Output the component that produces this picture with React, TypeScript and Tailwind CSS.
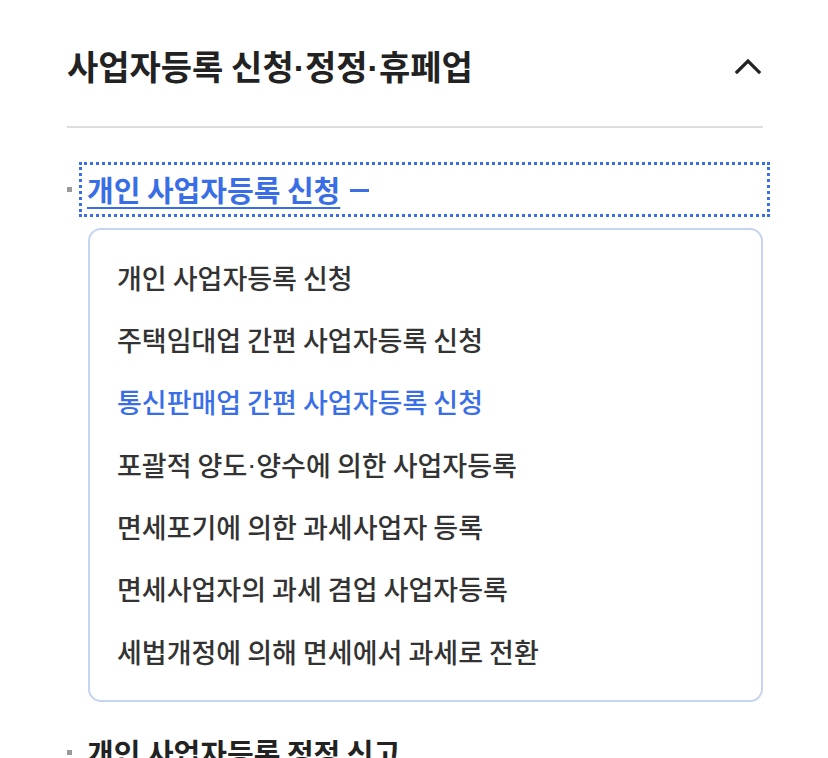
import React from "react";

const items = [
  { t: "개인 사업자등록 신청", active: false },
  { t: "주택임대업 간편 사업자등록 신청", active: false },
  { t: "통신판매업 간편 사업자등록 신청", active: true },
  { t: "포괄적 양도·양수에 의한 사업자등록", active: false },
  { t: "면세포기에 의한 과세사업자 등록", active: false },
  { t: "면세사업자의 과세 겸업 사업자등록", active: false },
  { t: "세법개정에 의해 면세에서 과세로 전환", active: false },
];

function Dot() {
  return <span style={{ fontFamily: '"Liberation Sans", sans-serif' }}>·</span>;
}

function withDots(t: string) {
  const parts = t.split("·");
  return parts.map((p, i) => (
    <React.Fragment key={i}>
      {i > 0 && <Dot />}
      {p}
    </React.Fragment>
  ));
}

export default function App() {
  return (
    <div
      className="w-[828px] h-[758px] overflow-hidden bg-white pl-[67px] pr-[65px]"
      style={{ fontFamily: '"Noto Sans CJK KR", "Noto Sans", sans-serif' }}
    >
      <div className="flex items-center justify-between h-[126px] pt-[8px]">
        <h2 className="text-[34px] font-bold text-[#222] leading-none">{withDots("사업자등록 신청·정정·휴페업")}</h2>
        <svg width="28" height="20" viewBox="0 0 28 20" className="mr-[1px] mb-[2px]">
          <path d="M3 16 L14 5 L25 16" fill="none" stroke="#222" strokeWidth="3.2" strokeLinecap="square" />
        </svg>
      </div>
      <div className="h-[2px] bg-[#dedede]" />
      <div className="mt-[34px] flex items-center">
        <span className="w-[5px] h-[5px] bg-[#999] shrink-0" />
        <div className="ml-[7px] mr-[-7px] flex-1 h-[55px] border-[3px] border-dotted border-[#3a6ee6] flex items-center pl-[5px]">
          <span className="text-[29px] font-bold text-[#3a6ee6] underline underline-offset-[5px] decoration-2 leading-none">
            개인 사업자등록 신청
          </span>
          <span className="ml-[10px] w-[19px] h-[3px] bg-[#3a6ee6] mt-[2px]" />
        </div>
      </div>
      <div className="mt-[11px] ml-[21px] mr-[0px] border-2 border-[#c6d4ef] rounded-[13px] py-[17px]">
        {items.map((it) => (
          <div
            key={it.t}
            className={`h-[62.3px] flex items-center pl-[27px] text-[27px] font-medium ${
              it.active ? "text-[#3a6ee6]" : "text-[#333]"
            }`}
          >
            {withDots(it.t)}
          </div>
        ))}
      </div>
      <div className="mt-[36px] flex items-center">
        <span className="w-[5px] h-[5px] bg-[#999] shrink-0" />
        <span className="ml-[15px] text-[29px] font-bold text-[#222] leading-none">개인 사업자등록 정정 신고</span>
      </div>
    </div>
  );
}
